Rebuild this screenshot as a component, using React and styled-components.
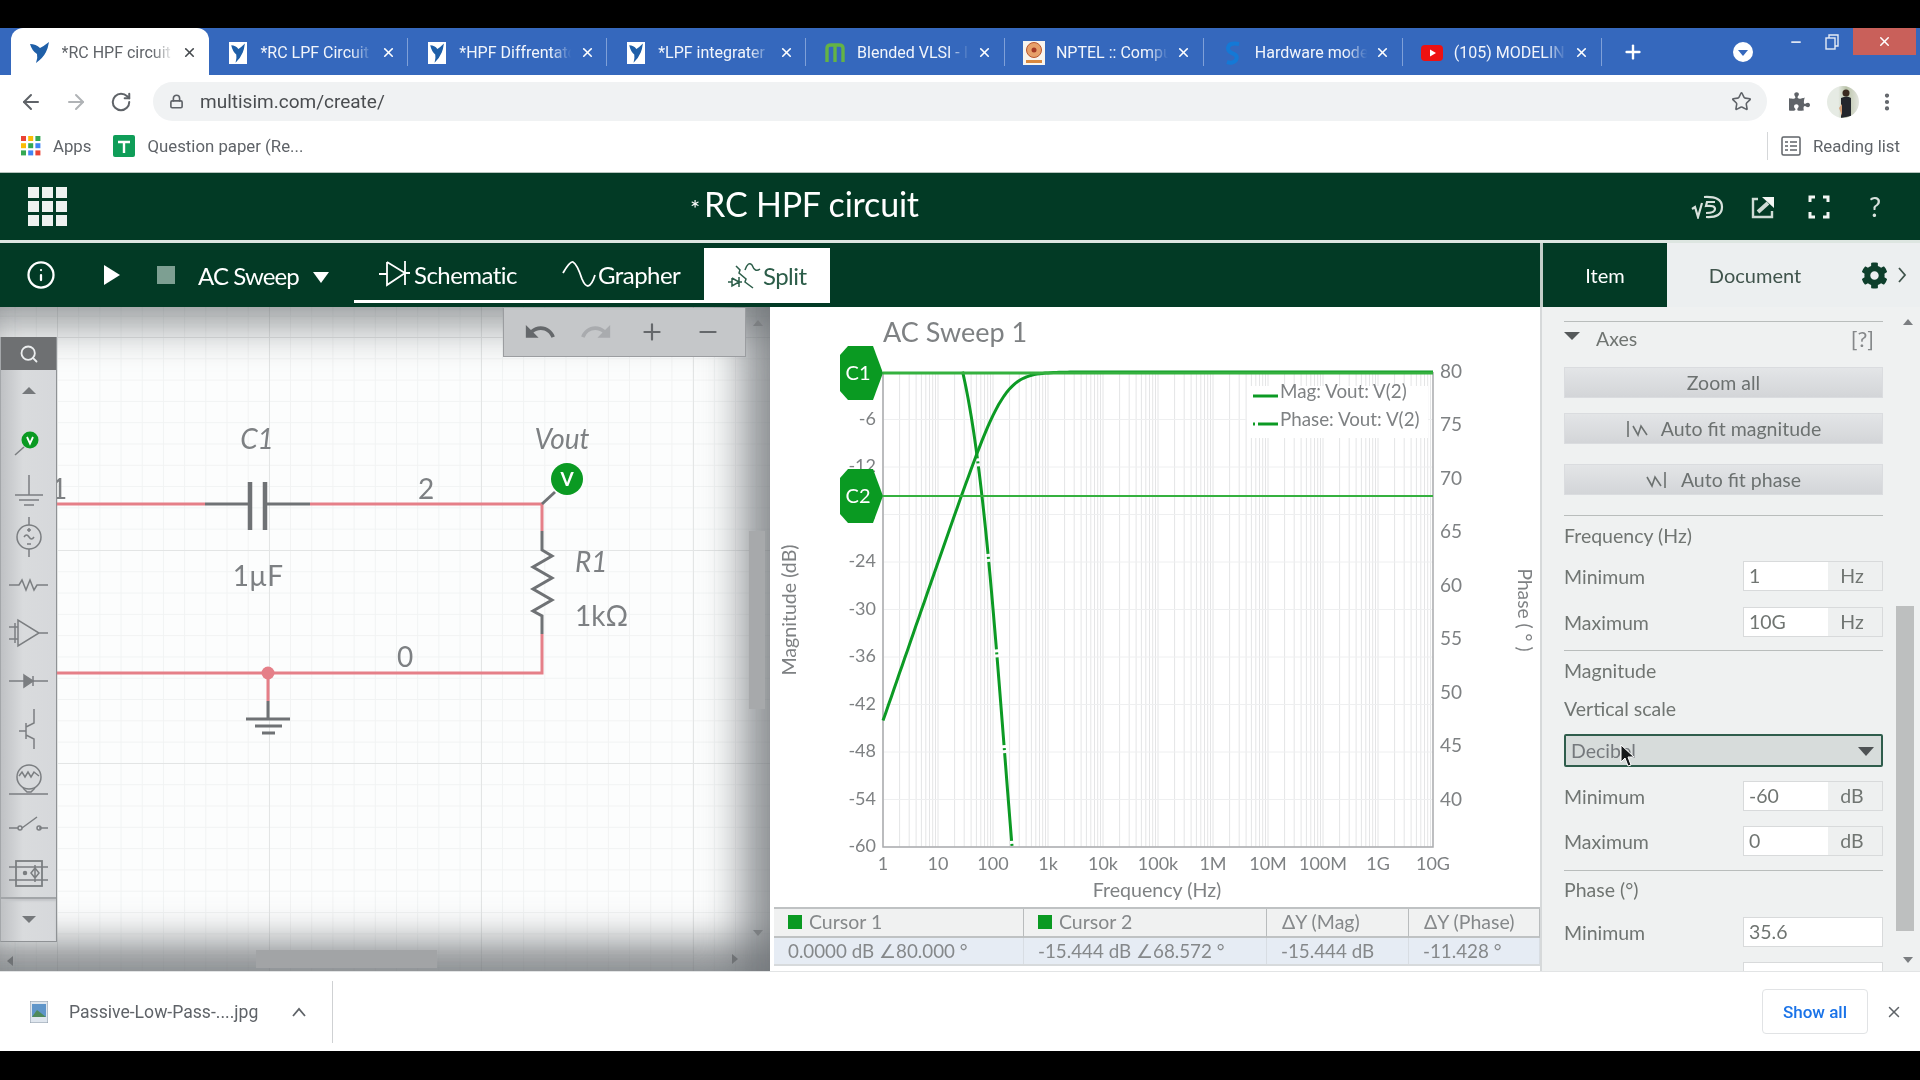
import React from "react";
import styled, { createGlobalStyle } from "styled-components";
import { ArrowLeft, ArrowRight, RotateCw, Lock, Star, MoreVertical, Plus, X, Info, Search, Minus } from "lucide-react";
import { FaPuzzlePiece, FaCog } from "react-icons/fa";
import { MdUndo, MdRedo } from "react-icons/md";

const GlobalStyle = createGlobalStyle`
  html, body {
    margin: 0;
    padding: 0;
    background: #000;
  }
  * {
    box-sizing: border-box;
  }
`;

const Page = styled.div`
  width: 1920px;
  height: 1080px;
  overflow: hidden;
  background: #000;
  display: flex;
  flex-direction: column;
  font-family: Lato, "Open Sans", sans-serif;
  filter: blur(0.4px);
`;

const Letterbox = styled.div`
  height: ${(p) => p.$h}px;
  flex: none;
  background: #000;
`;

/* browser chrome */
const TabStrip = styled.div`
  height: 47px;
  flex: none;
  background: #3568bd;
  display: flex;
  padding-left: 10.5px;
  font-family: Roboto, "Open Sans", sans-serif;
`;

const Tab = styled.div`
  width: 198.9px;
  flex: none;
  position: relative;
  display: flex;
  align-items: center;
  padding: 2px 11px 0 18px;
  color: ${(p) => (p.$active ? "#5f6368" : "#f2f5fb")};
  background: ${(p) => (p.$active ? "#fff" : "transparent")};
  border-radius: ${(p) => (p.$active ? "12px 12px 0 0" : "0")};
  ${(p) =>
    p.$sep &&
    `&::after {
      content: "";
      position: absolute;
      right: 0;
      top: 10px;
      bottom: 9px;
      width: 1px;
      background: #7fa0d8;
    }`}
`;

const TabIcon = styled.span`
  width: 22px;
  height: 24px;
  flex: none;
  display: flex;
  align-items: center;
  justify-content: center;
`;

const TabTitle = styled.span`
  flex: 1;
  min-width: 0;
  margin-left: 11px;
  font-size: 16px;
  white-space: nowrap;
  overflow: hidden;
  -webkit-mask-image: linear-gradient(to right, #000 78%, transparent 96%);
  mask-image: linear-gradient(to right, #000 78%, transparent 96%);
`;

const TabClose = styled.span`
  width: 18px;
  flex: none;
  display: flex;
  justify-content: center;
  margin-left: 2px;
  color: ${(p) => (p.$active ? "#45494d" : "#fff")};
`;

const NewTab = styled.div`
  width: 62px;
  flex: none;
  display: flex;
  align-items: center;
  justify-content: center;
  color: #fff;
`;

const ProfileDot = styled.div`
  margin: 14px 0 0 69px;
  width: 20px;
  height: 20px;
  flex: none;
  border-radius: 50%;
  background: #fff;
  display: flex;
  align-items: center;
  justify-content: center;
  &::after {
    content: "";
    border-left: 5px solid transparent;
    border-right: 5px solid transparent;
    border-top: 6px solid #3568bd;
    margin-top: 2px;
  }
`;

const WindowControls = styled.div`
  margin-left: auto;
  padding-right: 4px;
  display: flex;
  height: 27px;
  color: #dfe6f3;
`;

const WinButton = styled.div`
  width: ${(p) => p.$w || 36}px;
  margin-left: ${(p) => p.$ml || 0}px;
  display: flex;
  align-items: center;
  justify-content: center;
  background: ${(p) => p.$bg || "transparent"};
  color: ${(p) => p.$fg || "inherit"};
`;

const AddressRow = styled.div`
  height: 50px;
  flex: none;
  background: #fff;
  display: flex;
  align-items: center;
  padding: 3px 8px 0;
  color: #5f6368;
`;

const NavButton = styled.div`
  width: ${(p) => p.$w || 45}px;
  height: 40px;
  flex: none;
  display: flex;
  align-items: center;
  justify-content: center;
  color: ${(p) => p.$color || "#5f6368"};
`;

const UrlPill = styled.div`
  width: 1614px;
  height: 39px;
  margin: 0 10px;
  flex: none;
  border-radius: 20px;
  background: #f0f2f3;
  display: flex;
  align-items: center;
  padding: 0 15px 0 16px;
`;

const UrlText = styled.span`
  flex: 1;
  margin-left: 16px;
  font: 19px Roboto, sans-serif;
  color: #4a4d50;
`;

const Avatar = styled.div`
  width: 32px;
  height: 32px;
  border-radius: 50%;
  background: linear-gradient(90deg, #e6ebe4 0 35%, #b9c2a8 60%, #e4e6df 100%);
  overflow: hidden;
`;

const BookmarkRow = styled.div`
  height: 47px;
  flex: none;
  background: #fff;
  display: flex;
  align-items: center;
  padding: 0 0 5px 21px;
  font: 16.8px Roboto, sans-serif;
  color: #5f6368;
`;

const BookmarkLabel = styled.span`
  margin-left: ${(p) => p.$ml}px;
`;

const ReadingList = styled.div`
  margin-left: auto;
  margin-right: 20px;
  height: 28px;
  padding-left: 13px;
  border-left: 1px solid #d5d7d9;
  display: flex;
  align-items: center;
  gap: 12px;
`;

/* multisim header */
const AppHeader = styled.div`
  height: 71px;
  flex: none;
  background: #023a25;
  border-top: 1px solid #b7c4be;
  border-bottom: 3px solid #dde6e1;
  display: flex;
  align-items: center;
  padding-left: 28px;
  color: #fff;
`;

const AppGrid = styled.div`
  width: 39px;
  height: 39px;
  display: grid;
  grid-template-columns: repeat(3, 11px);
  grid-template-rows: repeat(3, 11px);
  gap: 3px;
  span {
    background: #eef2f0;
  }
`;

const DocTitle = styled.div`
  margin: -6px 0 0 623px;
  font-size: 34px;
  letter-spacing: -0.2px;
  display: flex;
  align-items: baseline;
  gap: 4px;
  small {
    font-size: 24px;
  }
`;

const HeaderIcons = styled.div`
  margin-left: auto;
  display: flex;
  align-items: center;
  padding-right: 17px;
`;

const HeaderIcon = styled.div`
  width: 56px;
  display: flex;
  align-items: center;
  justify-content: center;
  font-size: 27px;
  line-height: 1;
  color: #d8e2dd;
`;

/* toolbar */
const Toolbar = styled.div`
  height: 64px;
  flex: none;
  display: flex;
  background: #023a25;
  color: #fff;
`;

const RunControls = styled.div`
  width: 354px;
  flex: none;
  display: flex;
  align-items: center;
  padding-left: 26px;
`;

const PlayIcon = styled.div`
  margin-left: 48px;
  width: 0;
  height: 0;
  border-left: 16px solid #fff;
  border-top: 10px solid transparent;
  border-bottom: 10px solid transparent;
`;

const StopIcon = styled.div`
  margin-left: 37px;
  width: 18px;
  height: 18px;
  background: #7d9f92;
`;

const SweepLabel = styled.span`
  margin-left: 23px;
  font-size: 24px;
  letter-spacing: -0.9px;
`;

const SweepCaret = styled.span`
  margin-left: 14px;
  width: 0;
  height: 0;
  margin-top: 4px;
  border-left: 8px solid transparent;
  border-right: 8px solid transparent;
  border-top: 11px solid #fff;
`;

const ViewTabs = styled.div`
  width: 1186px;
  flex: none;
  display: flex;
  padding-top: 5px;
  height: 60px;
`;

const ViewGroup = styled.div`
  width: 350px;
  display: flex;
  border-bottom: 3px solid #fff;
`;

const ViewTab = styled.div`
  width: ${(p) => p.$w}px;
  display: flex;
  align-items: center;
  padding-left: ${(p) => p.$pl}px;
  gap: ${(p) => p.$gap || 2}px;
  font-size: 24px;
  letter-spacing: -0.55px;
  background: ${(p) => (p.$active ? "#fff" : "transparent")};
  color: ${(p) => (p.$active ? "#2c5d49" : "#fff")};
`;

const SideTabs = styled.div`
  flex: 1;
  display: flex;
  border-left: 3px solid #c3cec9;
  background: #eceff0;
  color: #40544c;
  font-size: 20px;
`;

const SideTab = styled.div`
  width: ${(p) => p.$w}px;
  display: flex;
  align-items: center;
  justify-content: center;
  background: ${(p) => (p.$active ? "#023a25" : "transparent")};
  color: ${(p) => (p.$active ? "#fff" : "#40544c")};
`;

const SideTabTools = styled.div`
  flex: 1;
  display: flex;
  align-items: center;
  justify-content: flex-end;
  gap: 9px;
  padding-right: 13px;
  color: #0e3f2c;
`;

/* workspace */
const Workspace = styled.div`
  height: 664px;
  flex: none;
  display: flex;
  background: #fff;
`;

const SchematicPane = styled.div`
  width: 770px;
  flex: none;
  position: relative;
  overflow: hidden;
  background-color: #fcfdfd;
  background-image:
    linear-gradient(to right, #e3e5e5 1px, transparent 1px),
    linear-gradient(to bottom, #e3e5e5 1px, transparent 1px),
    linear-gradient(to right, #f1f3f3 1px, transparent 1px),
    linear-gradient(to bottom, #f1f3f3 1px, transparent 1px);
  background-size: 212px 213px, 212px 213px, 21.2px 21.3px, 21.2px 21.3px;
  background-position: 57px 30px, 57px 30px, 57px 30px, 57px 30px;
  &::after {
    content: "";
    position: absolute;
    inset: 0;
    pointer-events: none;
    box-shadow:
      inset 0 46px 40px -24px rgba(90, 94, 98, 0.55),
      inset -52px 0 38px -22px rgba(110, 114, 118, 0.7),
      inset 0 -52px 36px -22px rgba(110, 114, 118, 0.75);
  }
`;

const CircuitSvg = styled.svg`
  display: block;
  font-family: Lato, sans-serif;
  fill: #7d8083;
`;

const Palette = styled.div`
  position: absolute;
  z-index: 2;
  left: 0;
  top: 30px;
  width: 57px;
  height: 605px;
  background: linear-gradient(90deg, #bfc1c4 0%, #d9dbdd 40%, #d6d8db 100%);
  border-right: 1px solid #8f9295;
  border-bottom: 1px solid #8f9295;
  border-left: 1px solid #a4a7aa;
  display: flex;
  flex-direction: column;
`;

const PaletteSearch = styled.div`
  height: 33px;
  flex: none;
  background: #6e7072;
  color: #eceeef;
  display: flex;
  align-items: center;
  justify-content: center;
`;

const PaletteArrow = styled.div`
  height: ${(p) => p.$h}px;
  flex: none;
  display: flex;
  align-items: center;
  justify-content: center;
  padding-bottom: ${(p) => p.$pb || 0}px;
  ${(p) => p.$sep && "border-top: 2px solid #a2a5a8; box-shadow: inset 0 2px 2px #c3c5c8;"}
  &::after {
    content: "";
    border-left: 7px solid transparent;
    border-right: 7px solid transparent;
    ${(p) => (p.$up ? "border-bottom: 7px solid #75787b;" : "border-top: 7px solid #75787b;")}
  }
`;

const PaletteTool = styled.svg`
  width: 55px;
  height: 48px;
  flex: none;
  display: block;
  fill: none;
  stroke: #7b7e81;
  stroke-width: 1.5;
`;

const HistoryBar = styled.div`
  position: absolute;
  z-index: 2;
  left: 503px;
  top: 1px;
  width: 243px;
  height: 49px;
  background: #c5c7c9;
  border: 1px solid #9b9da0;
  border-top: none;
  display: flex;
  align-items: center;
  padding: 0 8px;
`;

const HistoryButton = styled.div`
  width: 56px;
  flex: none;
  display: flex;
  justify-content: center;
  color: ${(p) => (p.$off ? "#a9abae" : "#65686b")};
`;

const ScrollThumbV = styled.div`
  position: absolute;
  z-index: 2;
  left: 749px;
  top: 224px;
  width: 16px;
  height: 178px;
  background: #a7a9ab;
`;

const ScrollThumbH = styled.div`
  position: absolute;
  z-index: 2;
  left: 256px;
  top: 643px;
  width: 181px;
  height: 18px;
  background: #a2a4a6;
`;

const ScrollArrow = styled.div`
  position: absolute;
  z-index: 2;
  left: ${(p) => p.$x}px;
  top: ${(p) => p.$y}px;
  width: 0;
  height: 0;
  ${(p) => p.$dir === "up" && "border-left: 5px solid transparent; border-right: 5px solid transparent; border-bottom: 6px solid #7b7e81;"}
  ${(p) => p.$dir === "down" && "border-left: 5px solid transparent; border-right: 5px solid transparent; border-top: 6px solid #7b7e81;"}
  ${(p) => p.$dir === "left" && "border-top: 5px solid transparent; border-bottom: 5px solid transparent; border-right: 6px solid #6f7275;"}
  ${(p) => p.$dir === "right" && "border-top: 5px solid transparent; border-bottom: 5px solid transparent; border-left: 6px solid #6f7275;"}
`;

const ChartPane = styled.div`
  width: 770px;
  flex: none;
  padding-left: 4px;
  background: #fff;
`;

const ChartSvg = styled.svg`
  display: block;
  font-family: Lato, sans-serif;
  font-size: 18px;
  fill: #7e8183;
`;

const CursorTable = styled.div`
  display: grid;
  grid-template-columns: 250px 243px 142px 1fr;
  grid-template-rows: 29px 26px;
  border-top: 2px solid #bfc2c3;
  border-bottom: 2px solid #d7dadc;
  color: #85888a;
`;

const CursorHead = styled.div`
  display: flex;
  align-items: center;
  gap: 7px;
  padding: 0 0 2px ${(p) => p.$pl || 14}px;
  font-size: 19.5px;
  background: #f0f1f1;
  border-right: 1px solid #b9bcbd;
  border-bottom: 2px solid #bfc2c3;
  i {
    width: 14px;
    height: 14px;
    background: #0a9a22;
  }
`;

const CursorValue = styled.div`
  display: flex;
  align-items: center;
  padding: 0 0 2px 14px;
  font-size: 18.8px;
  background: #e6ecf4;
  border-right: 1px solid #d8dde3;
`;

/* side panel */
const SidePanel = styled.div`
  flex: 1;
  position: relative;
  overflow: hidden;
  background: #eff1f1;
  border-left: 2px solid #d6d9da;
  padding: 14px 37px 0 22px;
  font-size: 19.5px;
  color: #707572;
`;

const Rule = styled.div`
  height: 1px;
  margin-top: ${(p) => p.$mt || 0}px;
  background: #b9bdbc;
`;

const AxesHead = styled.div`
  height: 32px;
  display: flex;
  align-items: center;
  padding-right: 9px;
  &::before {
    content: "";
    margin-right: 16px;
    margin-top: -4px;
    border-left: 8px solid transparent;
    border-right: 8px solid transparent;
    border-top: 8px solid #55595a;
  }
  span:last-child {
    margin-left: auto;
    font-size: 22px;
    color: #85888a;
  }
`;

const PanelButton = styled.div`
  height: 31px;
  margin-top: ${(p) => p.$mt}px;
  display: flex;
  align-items: center;
  justify-content: center;
  gap: 10px;
  background: linear-gradient(#e3e5e7, #d3d5d8);
  border: 1px solid #dadcdf;
  color: #6c7170;
`;

const SectionLabel = styled.div`
  height: 24px;
  line-height: 24px;
  margin-top: ${(p) => p.$mt}px;
`;

const FieldRow = styled.div`
  height: 30px;
  margin-top: ${(p) => p.$mt}px;
  display: flex;
  align-items: center;
  justify-content: space-between;
`;

const FieldBox = styled.div`
  width: 140px;
  height: 30px;
  flex: none;
  display: flex;
  background: #fff;
  border: 1px solid #d8dadb;
`;

const FieldValue = styled.div`
  width: 84px;
  padding-left: 5px;
  line-height: 28px;
  background: #fff;
`;

const FieldUnit = styled.div`
  flex: 1;
  text-align: center;
  padding-right: 6px;
  line-height: 28px;
  background: #eef0f0;
`;

const SelectBox = styled.div`
  height: 33px;
  margin-top: 13px;
  position: relative;
  display: flex;
  align-items: center;
  padding: 0 5px;
  background: #d7dcdb;
  border: 2px solid #2f5d4c;
  border-radius: 2px;
  color: #75797d;
  &::after {
    content: "";
    position: absolute;
    right: 7px;
    top: 11px;
    border-left: 8px solid transparent;
    border-right: 8px solid transparent;
    border-top: 9px solid #4e5254;
  }
`;

const PointerSvg = styled.svg`
  position: absolute;
  left: 54px;
  top: 8px;
`;

const PanelScrollThumb = styled.div`
  position: absolute;
  left: 354px;
  top: 299px;
  width: 18px;
  height: 325px;
  background: #bdbfbf;
`;

/* downloads */
const DownloadBar = styled.div`
  height: 80px;
  flex: none;
  background: #fff;
  border-top: 1px solid #e2e4e5;
  display: flex;
  align-items: center;
  padding-left: 30px;
  font: 17.6px Roboto, sans-serif;
  color: #5f6368;
`;

const DownloadName = styled.span`
  margin-left: 21px;
  width: 222px;
  white-space: nowrap;
`;

const DownloadSep = styled.div`
  margin-left: 25px;
  width: 1px;
  height: 62px;
  background: #cfd1d3;
`;

const ShowAll = styled.div`
  margin-left: auto;
  width: 106px;
  height: 45px;
  border: 1px solid #e1e3e5;
  border-radius: 4px;
  color: #1a73e8;
  font-size: 17px;
  font-weight: 500;
  display: flex;
  align-items: center;
  justify-content: center;
`;

const DownloadClose = styled.div`
  width: 52px;
  display: flex;
  justify-content: center;
  color: #5f6368;
`;

function NiIcon({ active }) {
  const bird = "M1 3 Q7 3 11 7 Q15 5 20 1 Q19 7 17 11 Q14 17 7 22 Q9 17 8 13 Q3 10 1 3 Z";
  if (active) {
    return (
      <svg width="22" height="24" viewBox="0 0 22 24">
        <path d={bird} fill="#1f5fa8" />
      </svg>
    );
  }
  return (
    <svg width="22" height="24" viewBox="0 0 22 24">
      <rect x="2" y="1" width="18" height="22" fill="#fff" />
      <g transform="translate(3.5 1.5) scale(0.72 0.92)">
        <path d={bird} fill="#1e5fa8" />
      </g>
    </svg>
  );
}

const tabs = [
  { title: "*RC HPF circuit", icon: <NiIcon active />, active: true },
  { title: "*RC LPF Circuit", icon: <NiIcon />, sep: true },
  { title: "*HPF Diffrentator", icon: <NiIcon />, sep: true },
  { title: "*LPF integrater", icon: <NiIcon />, sep: true },
  {
    title: "Blended VLSI - Intro",
    sep: true,
    icon: (
      <svg width="22" height="24" viewBox="0 0 22 24">
        <path d="M3 21 V7 Q3 4 7 4 H15 Q19 4 19 7 V21 M11 4 V21" fill="none" stroke="#64b345" strokeWidth="3.4" />
      </svg>
    ),
  },
  {
    title: "NPTEL :: Computer",
    sep: true,
    icon: (
      <svg width="22" height="24" viewBox="0 0 22 24">
        <rect x="0" y="0" width="22" height="24" fill="#f8f4ee" />
        <circle cx="11" cy="9" r="7.5" fill="#e7a06a" stroke="#b8562f" />
        <circle cx="11" cy="9" r="2.5" fill="#a53a26" />
        <rect x="3" y="19" width="16" height="3" fill="#d9883f" />
      </svg>
    ),
  },
  {
    title: "Hardware modeling",
    sep: true,
    icon: (
      <svg width="22" height="24" viewBox="0 0 22 24">
        <path d="M17 3 Q7 1 6 7 Q6 11 12 13 Q16 15 14 19 Q11 23 5 21" fill="none" stroke="#1479d6" strokeWidth="4" />
      </svg>
    ),
  },
  {
    title: "(105) MODELING",
    sep: true,
    icon: (
      <svg width="22" height="24" viewBox="0 0 22 24">
        <rect x="0" y="4" width="22" height="16" rx="4" fill="#ee1111" />
        <path d="M9 8.5 L15 12 L9 15.5 Z" fill="#fff" />
      </svg>
    ),
  },
];

function DiodeIcon() {
  return (
    <svg width="33" height="32" viewBox="0 0 33 32" fill="none" stroke="#fff" strokeWidth="1.8">
      <path d="M1 16 H9 M9 4 V27 L27 15 L9 4 M27 3 V27 M27 15 H32" />
    </svg>
  );
}

function SineIcon() {
  return (
    <svg width="34" height="30" viewBox="0 0 34 30" fill="none" stroke="#fff" strokeWidth="1.8">
      <path d="M1 14 Q8 2 11 3 Q15 5 20 20 Q23 27 26 27 Q30 26 33 16" />
    </svg>
  );
}

function SplitIcon() {
  return (
    <svg width="33" height="30" viewBox="0 0 33 30" fill="none" stroke="#2c5d49" strokeWidth="1.5">
      <path d="M0 21 H4 M4 17 V25 L11 21 L4 17 M11 16 V26 M11 21 H14" />
      <path d="M8 5 L12 9 L11 12 L18 18 L17 21 L25 27" />
      <path d="M17 9 Q20 0 24 4 Q27 12 32 8" />
    </svg>
  );
}

function SqrtIcon() {
  return (
    <svg width="33" height="24" viewBox="0 0 33 24" fill="none" stroke="#d8e2dd" strokeWidth="2.2">
      <path d="M1 14 L4 12 L7 22 L11 8" />
      <path d="M13 2 Q31 1 31 12 Q31 23 15 22" />
      <path d="M24 7 H16 L15 11 Q24 10 24 14 Q24 18 15 18" />
    </svg>
  );
}

function ShareIcon() {
  return (
    <svg width="24" height="24" viewBox="0 0 24 24" fill="none" stroke="#cfdbd5" strokeWidth="2.4">
      <path d="M7 4 H2 V22 H21 V16" />
      <path d="M7 17 L17 8" strokeWidth="4" />
      <path d="M11 2 H23 V13 Z" fill="#f3f6f4" stroke="none" />
    </svg>
  );
}

function FullscreenIcon() {
  return (
    <svg width="22" height="24" viewBox="0 0 22 24" fill="none" stroke="#f3f6f4" strokeWidth="3">
      <path d="M2 7 V2 H7 M15 2 H20 V7 M2 17 V22 H7 M15 22 H20 V17" />
    </svg>
  );
}

const Tool = ({ children }) => <PaletteTool viewBox="0 0 55 48">{children}</PaletteTool>;

function PaletteIcons() {
  return (
    <>
      <Tool>
        <path d="M23 30 L14 38" />
        <circle cx="29" cy="23" r="8.5" fill="#0a9a22" stroke="none" />
        <path d="M26 20 L29 26.5 L32 20" stroke="#fff" strokeWidth="1.8" />
      </Tool>
      <Tool>
        <path d="M28 10 V30 M14 30 H42 M18 35 H38 M23 40 H33" />
      </Tool>
      <Tool>
        <circle cx="28" cy="24" r="12" />
        <path d="M28 4 V12 M28 36 V44 M23 24 Q25.5 20 28 24 T33 24 M28 15 V19 M26 17 H30 M26 31 H30" />
      </Tool>
      <Tool>
        <path d="M8 24 H18 L21 19 L25 29 L29 19 L33 29 L36 24 H47" />
      </Tool>
      <Tool>
        <path d="M17 11 V37 L38 24 Z M8 18 H17 M8 30 H17 M38 24 H47 M14 14 V34" />
      </Tool>
      <Tool>
        <path d="M8 24 H47 M32 19 V29" />
        <path d="M23 18 L32 24 L23 30 Z" fill="#7b7e81" />
      </Tool>
      <Tool>
        <path d="M33 4 V18 L25 22 V30 L33 34 V44 M25 18 V34 M18 26 H25" />
      </Tool>
      <Tool>
        <circle cx="28" cy="24" r="12" />
        <path d="M18 23 L21 19 L24 24 L27 19 L30 24 L33 19 L38 23 M22 35 L26 39 H30 L34 35 M8 41 H47" />
      </Tool>
      <Tool>
        <path d="M8 27 H17 M21 27 L36 16 M38 27 H47" />
        <circle cx="19" cy="27" r="2" />
        <circle cx="38" cy="27" r="2" />
      </Tool>
      <Tool>
        <rect x="15" y="12" width="26" height="25" strokeWidth="1.8" />
        <path d="M8 18 H47 M8 31 H47 M34 16 V33 M30 24 L34 19 L38 24 L34 29 Z" />
        <circle cx="24" cy="24" r="1.5" fill="#7b7e81" />
      </Tool>
    </>
  );
}

function Circuit() {
  const pink = "#e57f88";
  const gray = "#6f7275";
  return (
    <CircuitSvg width="770" height="664" viewBox="0 306 770 664">
      <g fill="none" strokeWidth="3">
        <path d="M56 503 H205 M310 503 H542 V530 M56 672 H542 V633 M268 672 V700" stroke={pink} />
        <path d="M205 503 H250 M265 503 H310 M542 530 V549 L552 555 L533 566 L552 577 L533 588 L552 599 L533 610 L542 615 V633 M268 700 V718" stroke={gray} />
        <path d="M250 481 V529 M265 481 V529" stroke={gray} strokeWidth="4.5" />
        <path d="M246 718 H290 M255 725 H282 M262 732 H275" stroke={gray} />
        <path d="M542 503 L555 491" stroke={gray} />
      </g>
      <circle cx="268" cy="672" r="6.5" fill={pink} />
      <circle cx="567" cy="478" r="16" fill="#0a9a22" />
      <text x="567" y="485" textAnchor="middle" fontSize="19" fontWeight="700" fill="#fff">V</text>
      <text x="257" y="448" textAnchor="middle" fontSize="28" fontStyle="italic">C1</text>
      <text x="562" y="448" textAnchor="middle" fontSize="28" fontStyle="italic">Vout</text>
      <text x="426" y="498" textAnchor="middle" fontSize="28">2</text>
      <text x="59" y="498" textAnchor="middle" fontSize="28">1</text>
      <text x="258" y="585" textAnchor="middle" fontSize="28">1µF</text>
      <text x="575" y="571" fontSize="28" fontStyle="italic">R1</text>
      <text x="575" y="625" fontSize="28">1kΩ</text>
      <text x="405" y="666" textAnchor="middle" fontSize="28">0</text>
    </CircuitSvg>
  );
}

const PLOT = { left: 882, right: 1432, top: 372, bottom: 847 };
const xOf = (logF) => PLOT.left + ((PLOT.right - PLOT.left) / 10) * logF;
const yDb = (db) => PLOT.top + (-db / 60) * (PLOT.bottom - PLOT.top);
const yDeg = (deg) => PLOT.top + ((80 - deg) / 44.4) * (PLOT.bottom - PLOT.top);
const FC = 159.15;

function magPath() {
  const pts = [];
  for (let l = 0; l <= 10.001; l += 0.05) {
    const r = Math.pow(10, l) / FC;
    const db = 20 * Math.log10(r / Math.sqrt(1 + r * r));
    pts.push(`${xOf(l).toFixed(1)} ${yDb(db).toFixed(1)}`);
  }
  return "M" + pts.join(" L");
}

function phasePath() {
  const pts = [];
  for (let l = 1.447; l <= 2.35; l += 0.02) {
    const deg = (Math.atan(FC / Math.pow(10, l)) * 180) / Math.PI;
    pts.push(`${xOf(l).toFixed(1)} ${yDeg(deg).toFixed(1)}`);
  }
  return "M" + pts.join(" L");
}

const xTicks = ["1", "10", "100", "1k", "10k", "100k", "1M", "10M", "100M", "1G", "10G"];
const dbTicks = [-6, -12, -18, -24, -30, -36, -42, -48, -54, -60];
const degTicks = [80, 75, 70, 65, 60, 55, 50, 45, 40];

function CursorTag({ y, label }) {
  return (
    <g>
      <path
        d={`M847 ${y - 27} H872 L882 ${y} L872 ${y + 27} H847 L839 ${y + 18} V${y - 18} Z`}
        fill="#0a9a22"
      />
      <text x="857" y={y + 7} textAnchor="middle" fontSize="20" fill="#fff">{label}</text>
    </g>
  );
}

function Chart() {
  const vLines = [];
  for (let d = 0; d < 10; d++) {
    for (let m = 1; m < 10; m++) {
      vLines.push(xOf(d + Math.log10(m)));
    }
  }
  const green = "#0c9a24";
  return (
    <ChartSvg width="766" height="600" viewBox="773 307 766 600">
      <text x="882" y="342" fontSize="27">AC Sweep 1</text>
      <g stroke="#e4e5e6" strokeWidth="1">
        {vLines.map((x, i) => (
          <path key={i} d={`M${x.toFixed(1)} ${PLOT.top} V${PLOT.bottom}`} />
        ))}
      </g>
      <g stroke="#eeeff0" strokeWidth="1">
        {dbTicks.map((d) => (
          <path key={d} d={`M${PLOT.left} ${yDb(d)} H${PLOT.right}`} />
        ))}
      </g>
      <path d={`M${PLOT.left} ${PLOT.top} V${PLOT.bottom} H${PLOT.right} V${PLOT.top}`} fill="none" stroke="#a9abad" strokeWidth="1.5" />
      <rect x="1246" y="386" width="181" height="52" fill="#fff" />
      <path d={magPath()} fill="none" stroke={green} strokeWidth="3" />
      <path d={phasePath()} fill="none" stroke={green} strokeWidth="3" strokeDasharray="88 3 2 3" />
      <path d={`M${PLOT.left} 373 H${PLOT.right}`} stroke="#35b13f" strokeWidth="3" />
      <path d={`M${PLOT.left} 496 H${PLOT.right}`} stroke="#35b13f" strokeWidth="2" />
      {dbTicks.map((d) => (
        <text key={d} x="875" y={yDb(d) + 5} textAnchor="end">{d}</text>
      ))}
      {degTicks.map((d) => (
        <text key={d} x="1439" y={yDeg(d) + 6} fontSize="19">{d}</text>
      ))}
      {xTicks.map((t, i) => (
        <text key={t} x={xOf(i)} y="870" textAnchor="middle">{t}</text>
      ))}
      <CursorTag y={373} label="C1" />
      <CursorTag y={496} label="C2" />
      <path d="M1252 396 H1277" stroke={green} strokeWidth="3" />
      <text x="1279" y="398" fontSize="18.8">Mag: Vout: V(2)</text>
      <path d="M1252 424 H1254 M1257 424 H1277" stroke={green} strokeWidth="3" />
      <text x="1279" y="426" fontSize="18.8">Phase: Vout: V(2)</text>
      <text x="1156" y="897" textAnchor="middle" fontSize="19.6">Frequency (Hz)</text>
      <text transform="translate(795 610) rotate(-90)" textAnchor="middle" fontSize="19.6">Magnitude (dB)</text>
      <text transform="translate(1517 610) rotate(90)" textAnchor="middle" fontSize="19.2">Phase ( ° )</text>
    </ChartSvg>
  );
}

function FitIcon({ barRight }) {
  return (
    <svg width="25" height="20" viewBox="0 0 25 20" fill="none" stroke="#6c7170" strokeWidth="1.6">
      {barRight ? (
        <path d="M1 7 L6 16 L9 7 L15 16 M19 2 V18" />
      ) : (
        <path d="M2 2 V18 M7 7 L12 16 L15 7 L21 16" />
      )}
    </svg>
  );
}

function Field({ label, value, unit, mt }) {
  return (
    <FieldRow $mt={mt}>
      <span>{label}</span>
      <FieldBox>
        <FieldValue>{value}</FieldValue>
        {unit && <FieldUnit>{unit}</FieldUnit>}
      </FieldBox>
    </FieldRow>
  );
}

function App() {
  return (
    <Page>
      <GlobalStyle />
      <Letterbox $h={28} />
      <TabStrip>
        {tabs.map((t) => (
          <Tab key={t.title} $active={t.active} $sep={t.sep}>
            <TabIcon>{t.icon}</TabIcon>
            <TabTitle>{t.title}</TabTitle>
            <TabClose $active={t.active}>
              <X size={15} strokeWidth={2.6} />
            </TabClose>
          </Tab>
        ))}
        <NewTab>
          <Plus size={22} strokeWidth={2.6} />
        </NewTab>
        <ProfileDot />
        <WindowControls>
          <WinButton>
            <Minus size={14} strokeWidth={3} />
          </WinButton>
          <WinButton>
            <svg width="14" height="16" viewBox="0 0 14 16" fill="none" stroke="#e6ebf5" strokeWidth="1.4">
              <rect x="1" y="4" width="9" height="11" />
              <path d="M4 4 V1 H13 V12 H10" />
            </svg>
          </WinButton>
          <WinButton $w={63} $ml={3} $bg="#c9605a" $fg="#fff">
            <X size={15} strokeWidth={2.4} />
          </WinButton>
        </WindowControls>
      </TabStrip>

      <AddressRow>
        <NavButton>
          <ArrowLeft size={24} strokeWidth={2} />
        </NavButton>
        <NavButton $color="#b0b3b6">
          <ArrowRight size={24} strokeWidth={2} />
        </NavButton>
        <NavButton>
          <RotateCw size={22} strokeWidth={2.2} />
        </NavButton>
        <UrlPill>
          <Lock size={15} strokeWidth={2.6} />
          <UrlText>multisim.com/create/</UrlText>
          <Star size={21} strokeWidth={1.8} />
        </UrlPill>
        <NavButton $w={44}>
          <FaPuzzlePiece size={21} />
        </NavButton>
        <NavButton $w={44}>
          <Avatar>
            <svg width="32" height="32" viewBox="0 0 32 32">
              <circle cx="19" cy="7" r="3.5" fill="#3a2a20" />
              <path d="M14 12 Q20 9 24 12 L24 30 L14 32 Z" fill="#23262c" />
              <path d="M12 22 L15 18 L15 30 Z" fill="#d2a079" />
            </svg>
          </Avatar>
        </NavButton>
        <NavButton $w={44}>
          <MoreVertical size={22} strokeWidth={2.6} />
        </NavButton>
      </AddressRow>

      <BookmarkRow>
        <svg width="20" height="20" viewBox="0 0 20 20">
          {[0, 1, 2].map((r) =>
            [0, 1, 2].map((c) => (
              <rect
                key={`${r}${c}`}
                x={c * 7.2}
                y={r * 7.2}
                width="5"
                height="5"
                fill={["#ea4335", "#fbbc05", "#34a853", "#4285f4"][(r + c) % 4]}
              />
            ))
          )}
        </svg>
        <BookmarkLabel $ml={12}>Apps</BookmarkLabel>
        <BookmarkLabel $ml={22}>
          <svg width="22" height="22" viewBox="0 0 22 22" style={{ display: "block" }}>
            <rect width="22" height="22" rx="2" fill="#0f9d58" />
            <path d="M5 7 H17 M11 7 V18" stroke="#fff" strokeWidth="2.4" />
          </svg>
        </BookmarkLabel>
        <BookmarkLabel $ml={12}>Question paper (Re...</BookmarkLabel>
        <ReadingList>
          <svg width="20" height="20" viewBox="0 0 20 20" fill="none" stroke="#5f6368" strokeWidth="1.5">
            <rect x="1" y="1" width="18" height="18" rx="1.5" />
            <path d="M4 6 H7 M9 6 H16 M4 10 H7 M9 10 H16 M4 14 H7 M9 14 H16" />
          </svg>
          <span>Reading list</span>
        </ReadingList>
      </BookmarkRow>

      <AppHeader>
        <AppGrid>
          {Array.from({ length: 9 }, (_, i) => (
            <span key={i} />
          ))}
        </AppGrid>
        <DocTitle>
          <small>*</small>RC HPF circuit
        </DocTitle>
        <HeaderIcons>
          <HeaderIcon>
            <SqrtIcon />
          </HeaderIcon>
          <HeaderIcon>
            <ShareIcon />
          </HeaderIcon>
          <HeaderIcon>
            <FullscreenIcon />
          </HeaderIcon>
          <HeaderIcon>?</HeaderIcon>
        </HeaderIcons>
      </AppHeader>

      <Toolbar>
        <RunControls>
          <Info size={30} strokeWidth={1.8} />
          <PlayIcon />
          <StopIcon />
          <SweepLabel>AC Sweep</SweepLabel>
          <SweepCaret />
        </RunControls>
        <ViewTabs>
          <ViewGroup>
            <ViewTab $w={191} $pl={24} $gap={3}>
              <DiodeIcon />
              Schematic
            </ViewTab>
            <ViewTab $w={159} $pl={17}>
              <SineIcon />
              Grapher
            </ViewTab>
          </ViewGroup>
          <ViewTab $w={126} $pl={24} $active>
            <SplitIcon />
            Split
          </ViewTab>
        </ViewTabs>
        <SideTabs>
          <SideTab $w={124} $active>Item</SideTab>
          <SideTab $w={176}>Document</SideTab>
          <SideTabTools>
            <FaCog size={27} />
            <svg width="10" height="18" viewBox="0 0 10 18" fill="none" stroke="#40544c" strokeWidth="1.8">
              <path d="M2 2 L8 9 L2 16" />
            </svg>
          </SideTabTools>
        </SideTabs>
      </Toolbar>

      <Workspace>
        <SchematicPane>
          <Circuit />
          <Palette>
            <PaletteSearch>
              <Search size={20} strokeWidth={2.2} />
            </PaletteSearch>
            <PaletteArrow $h={47} $pb={6} $up />
            <PaletteIcons />
            <PaletteArrow $h={43} $sep />
          </Palette>
          <HistoryBar>
            <HistoryButton>
              <MdUndo size={34} />
            </HistoryButton>
            <HistoryButton $off>
              <MdRedo size={34} />
            </HistoryButton>
            <HistoryButton>
              <Plus size={26} strokeWidth={2} />
            </HistoryButton>
            <HistoryButton>
              <Minus size={26} strokeWidth={2} />
            </HistoryButton>
          </HistoryBar>
          <ScrollArrow $dir="up" $x={753} $y={13} />
          <ScrollThumbV />
          <ScrollArrow $dir="down" $x={753} $y={623} />
          <ScrollArrow $dir="left" $x={7} $y={649} />
          <ScrollThumbH />
          <ScrollArrow $dir="right" $x={732} $y={647} />
        </SchematicPane>

        <ChartPane>
          <Chart />
          <CursorTable>
            <CursorHead><i />Cursor 1</CursorHead>
            <CursorHead><i />Cursor 2</CursorHead>
            <CursorHead $pl={15}>ΔY (Mag)</CursorHead>
            <CursorHead $pl={15}>ΔY (Phase)</CursorHead>
            <CursorValue>0.0000 dB ∠80.000 °</CursorValue>
            <CursorValue>-15.444 dB ∠68.572 °</CursorValue>
            <CursorValue>-15.444 dB</CursorValue>
            <CursorValue>-11.428 °</CursorValue>
          </CursorTable>
        </ChartPane>

        <SidePanel>
          <Rule />
          <AxesHead>
            <span>Axes</span>
            <span>[?]</span>
          </AxesHead>
          <PanelButton $mt={13}>Zoom all</PanelButton>
          <PanelButton $mt={15}>
            <FitIcon />
            Auto fit magnitude
          </PanelButton>
          <PanelButton $mt={20}>
            <FitIcon barRight />
            Auto fit phase
          </PanelButton>
          <Rule $mt={20} />
          <SectionLabel $mt={8}>Frequency (Hz)</SectionLabel>
          <Field mt={13} label="Minimum" value="1" unit="Hz" />
          <Field mt={16} label="Maximum" value="10G" unit="Hz" />
          <Rule $mt={13} />
          <SectionLabel $mt={8}>Magnitude</SectionLabel>
          <SectionLabel $mt={14}>Vertical scale</SectionLabel>
          <SelectBox>
            Decibel
            <PointerSvg width="16" height="24" viewBox="0 0 16 24">
              <path d="M1 1 V18 L5 14 L8 22 L11 21 L8 13 L14 13 Z" fill="#15181a" stroke="#fff" strokeWidth="1" />
            </PointerSvg>
          </SelectBox>
          <Field mt={14} label="Minimum" value="-60" unit="dB" />
          <Field mt={15} label="Maximum" value="0" unit="dB" />
          <Rule $mt={14} />
          <SectionLabel $mt={7}>Phase (°)</SectionLabel>
          <Field mt={15} label="Minimum" value="35.6" />
          <Field mt={15} label="" value="" />
          <ScrollArrow $dir="up" $x={361} $y={12} />
          <PanelScrollThumb />
          <ScrollArrow $dir="down" $x={361} $y={650} />
        </SidePanel>
      </Workspace>

      <DownloadBar>
        <svg width="18" height="22" viewBox="0 0 18 22">
          <rect width="18" height="22" fill="#dfe6ee" stroke="#8b98a6" />
          <rect x="2" y="3" width="14" height="13" fill="#5f95c9" />
          <path d="M2 16 L7 9 L16 16 Z" fill="#4f8a5a" />
        </svg>
        <DownloadName>Passive-Low-Pass-....jpg</DownloadName>
        <svg width="16" height="10" viewBox="0 0 16 10" fill="none" stroke="#5f6368" strokeWidth="1.8">
          <path d="M2 9 L8 2 L14 9" />
        </svg>
        <DownloadSep />
        <ShowAll>Show all</ShowAll>
        <DownloadClose>
          <X size={18} strokeWidth={2} />
        </DownloadClose>
      </DownloadBar>
      <Letterbox $h={29} />
    </Page>
  );
}

export default App;
